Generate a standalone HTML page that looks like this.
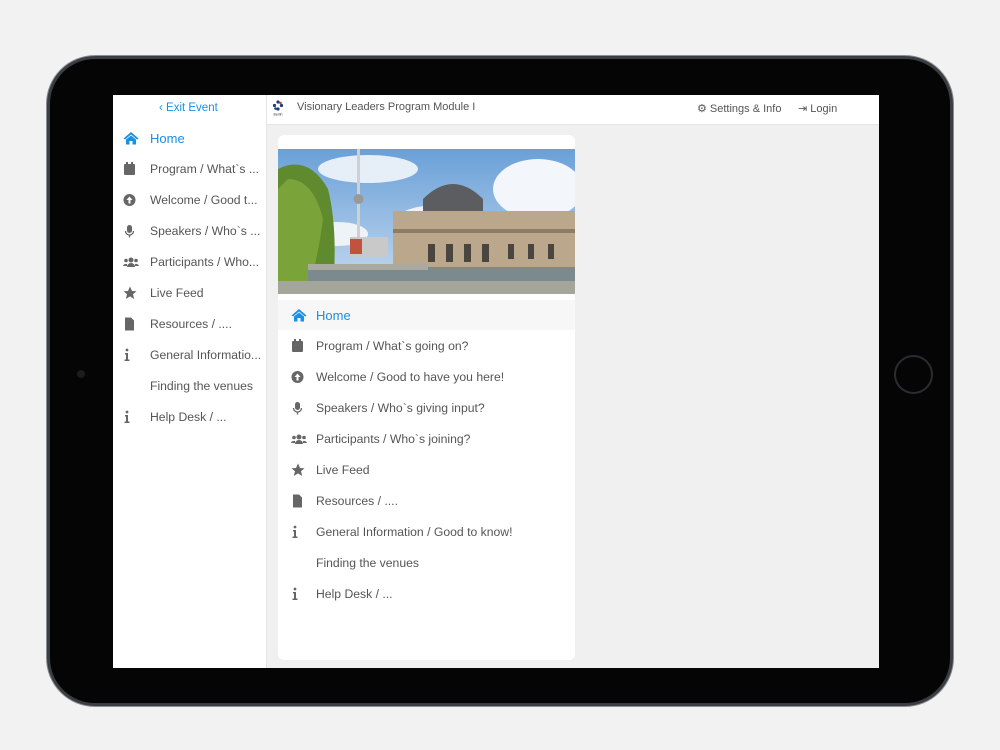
<!DOCTYPE html>
<html><head><meta charset="utf-8"><style>
*{margin:0;padding:0;box-sizing:border-box}
body{width:1000px;height:750px;background:#f2f2f2;position:relative;overflow:hidden;font-family:"Liberation Sans",sans-serif}
.ipad{position:absolute;left:47px;top:56px;width:906px;height:650px;border-radius:48px;background:#050505;border:3px solid #3a3d42;box-shadow:0 0 0 1px #8a8d92}
.cam{position:absolute;left:77px;top:370px;width:8px;height:8px;border-radius:50%;background:#1a1c20}
.home{position:absolute;left:894px;top:355px;width:39px;height:39px;border-radius:50%;border:2px solid #2a2c30}
.screen{position:absolute;left:113px;top:95px;width:766px;height:573px;background:#f0f0f0;overflow:hidden}
.top{position:absolute;left:0;top:0;width:766px;height:30px;background:#fff;border-bottom:1px solid #e6e6e6}
.side{position:absolute;left:0;top:0;width:154px;height:573px;background:#fff;border-right:1px solid #e4e4e4}
.exit{position:absolute;left:46px;top:7px;color:#1a8fe3;font-size:11.5px}
.title{position:absolute;left:184px;top:6px;font-size:11px;color:#555}
.logo{position:absolute;left:158px;top:5px}
.right{position:absolute;top:7px;font-size:11px;color:#555}
.item{position:absolute;height:30px;font-size:12.2px;color:#555;display:flex;align-items:center}
.item svg{position:absolute;left:0}
.card{position:absolute;left:165px;top:40px;width:297px;height:525px;background:#fff;border-radius:6px}
.blue{color:#1a8fe3}
</style></head><body>
<div class="ipad"></div>
<div class="cam"></div><div class="home"></div>
<div class="screen">
 <div class="top"></div>
 <div class="side">
  <div class="exit">‹ Exit Event</div>
 </div>
 <svg class="logo" width="14" height="16" viewBox="0 0 14 16"><g fill="#1e3c78"><circle cx="7" cy="2" r="1.6"/><circle cx="7" cy="9" r="1.6"/><circle cx="3.5" cy="5.5" r="1.6"/><circle cx="10.5" cy="5.5" r="1.6"/><circle cx="4.5" cy="8.5" r="1.3"/><circle cx="9.5" cy="3" r="1.3" fill="#d33"/></g><text x="7" y="15.5" font-size="3.5" text-anchor="middle" fill="#333">Berlin</text></svg>
 <div class="title">Visionary Leaders Program Module I</div>
 <div class="right" style="left:584px">⚙ Settings &amp; Info</div>
 <div class="right" style="left:685px">⇥ Login</div>

 <div class="item blue" style="left:10px;top:28px;font-size:13px"><svg width="16" height="14" viewBox="0 0 16 14"><path d="M8 1L0.5 7.5 2 8.5 8 3.5 14 8.5 15.5 7.5z M3 8.5V13.5H6.5V10H9.5V13.5H13V8.5L8 4.5z" fill="#1a8fe3"/></svg><span style="margin-left:27px">Home</span></div>
 <div class="item" style="left:10px;top:59px"><svg width="14" height="14"><rect x="1" y="2" width="11" height="11" rx="1" fill="#666"/><rect x="3" y="0" width="2" height="3" fill="#666"/><rect x="8" y="0" width="2" height="3" fill="#666"/></svg><span style="margin-left:27px">Program / What`s ...</span></div>
 <div class="item" style="left:10px;top:90px"><svg width="14" height="14"><circle cx="6.5" cy="7" r="6" fill="#666"/><path d="M6.5 3.5L3.5 7H5.5V10.5H7.5V7H9.5z" fill="#fff"/></svg><span style="margin-left:27px">Welcome / Good t...</span></div>
 <div class="item" style="left:10px;top:121px"><svg width="14" height="14"><rect x="4" y="1" width="5" height="8" rx="2.5" fill="#666"/><path d="M2.5 7a4 4 0 0 0 8 0M6.5 11v2.5" stroke="#666" stroke-width="1.3" fill="none"/></svg><span style="margin-left:27px">Speakers / Who`s ...</span></div>
 <div class="item" style="left:10px;top:152px"><svg width="16" height="14"><circle cx="8" cy="5" r="2.5" fill="#666"/><circle cx="3" cy="5.5" r="1.8" fill="#666"/><circle cx="13" cy="5.5" r="1.8" fill="#666"/><path d="M4 12a4 4 0 0 1 8 0z M0 11a3 2.5 0 0 1 4-2v2z M16 11a3 2.5 0 0 0-4-2v2z" fill="#666"/></svg><span style="margin-left:27px">Participants / Who...</span></div>
 <div class="item" style="left:10px;top:183px"><svg width="14" height="14"><path d="M7 0.5L9 5 13.5 5.3 10 8.3 11.2 13 7 10.4 2.8 13 4 8.3 0.5 5.3 5 5z" fill="#666"/></svg><span style="margin-left:27px">Live Feed</span></div>
 <div class="item" style="left:10px;top:214px"><svg width="14" height="14"><path d="M2 0.5H8L11 3.5V13.5H2z" fill="#666"/></svg><span style="margin-left:27px">Resources / ....</span></div>
 <div class="item" style="left:10px;top:245px"><svg width="14" height="14"><circle cx="4" cy="2" r="1.4" fill="#666"/><path d="M2 5H5V11.5H6.5V13H1.5V11.5H3V6.5H2z" fill="#666"/></svg><span style="margin-left:27px">General Informatio...</span></div>
 <div class="item" style="left:10px;top:276px"><span style="margin-left:27px">Finding the venues</span></div>
 <div class="item" style="left:10px;top:307px"><svg width="14" height="14"><circle cx="4" cy="2" r="1.4" fill="#666"/><path d="M2 5H5V11.5H6.5V13H1.5V11.5H3V6.5H2z" fill="#666"/></svg><span style="margin-left:27px">Help Desk / ...</span></div>

 <div class="card">
  <svg style="position:absolute;left:0;top:14px" width="297" height="145" viewBox="0 0 297 145">
   <defs><linearGradient id="sky" x1="0" y1="0" x2="0" y2="1"><stop offset="0" stop-color="#6aa0d8"/><stop offset="1" stop-color="#c9dcef"/></linearGradient></defs>
   <rect width="297" height="145" fill="url(#sky)"/>
   <ellipse cx="90" cy="20" rx="50" ry="14" fill="#e6eef7"/><ellipse cx="260" cy="40" rx="45" ry="30" fill="#f3f6fa"/><ellipse cx="60" cy="85" rx="30" ry="12" fill="#eef3f8"/><ellipse cx="160" cy="70" rx="40" ry="14" fill="#eef3f8"/>
   <rect x="79" y="0" width="3" height="100" fill="#d0d0d0"/><circle cx="80.5" cy="50" r="5" fill="#999"/>
   <rect x="72" y="88" width="38" height="20" fill="#c9c9c9"/><rect x="72" y="90" width="12" height="15" fill="#c0533d"/>
   <path d="M145 50Q175 20 205 50V62H145z" fill="#5b5d61"/><rect x="115" y="62" width="182" height="60" fill="#bba88c"/><rect x="115" y="80" width="182" height="4" fill="#8e7d66"/>
   <g fill="#4b4540"><rect x="150" y="95" width="7" height="18"/><rect x="168" y="95" width="7" height="18"/><rect x="186" y="95" width="7" height="18"/><rect x="204" y="95" width="7" height="18"/><rect x="230" y="95" width="6" height="15"/><rect x="250" y="95" width="6" height="15"/><rect x="270" y="95" width="6" height="15"/></g>
   <path d="M0 20Q30 5 50 40Q60 80 55 140H0z" fill="#5f8a2e"/><path d="M10 30Q35 30 45 70Q40 110 30 140H0V40z" fill="#7aa33a"/>
   <rect x="30" y="118" width="267" height="27" fill="#7b8a8f"/><rect x="30" y="115" width="120" height="6" fill="#a9a9a0"/><rect x="0" y="132" width="297" height="13" fill="#a4a59b"/>
  </svg>
  <div style="position:absolute;left:0;top:165px;width:297px;height:30px;background:#f7f7f7"></div>
  <div class="item blue" style="left:13px;top:165px;font-size:13px"><svg width="16" height="14" viewBox="0 0 16 14"><path d="M8 1L0.5 7.5 2 8.5 8 3.5 14 8.5 15.5 7.5z M3 8.5V13.5H6.5V10H9.5V13.5H13V8.5L8 4.5z" fill="#1a8fe3"/></svg><span style="margin-left:25px">Home</span></div>
  <div class="item" style="left:13px;top:196px"><svg width="14" height="14"><rect x="1" y="2" width="11" height="11" rx="1" fill="#666"/><rect x="3" y="0" width="2" height="3" fill="#666"/><rect x="8" y="0" width="2" height="3" fill="#666"/></svg><span style="margin-left:25px">Program / What`s going on?</span></div>
  <div class="item" style="left:13px;top:227px"><svg width="14" height="14"><circle cx="6.5" cy="7" r="6" fill="#666"/><path d="M6.5 3.5L3.5 7H5.5V10.5H7.5V7H9.5z" fill="#fff"/></svg><span style="margin-left:25px">Welcome / Good to have you here!</span></div>
  <div class="item" style="left:13px;top:258px"><svg width="14" height="14"><rect x="4" y="1" width="5" height="8" rx="2.5" fill="#666"/><path d="M2.5 7a4 4 0 0 0 8 0M6.5 11v2.5" stroke="#666" stroke-width="1.3" fill="none"/></svg><span style="margin-left:25px">Speakers / Who`s giving input?</span></div>
  <div class="item" style="left:13px;top:289px"><svg width="16" height="14"><circle cx="8" cy="5" r="2.5" fill="#666"/><circle cx="3" cy="5.5" r="1.8" fill="#666"/><circle cx="13" cy="5.5" r="1.8" fill="#666"/><path d="M4 12a4 4 0 0 1 8 0z M0 11a3 2.5 0 0 1 4-2v2z M16 11a3 2.5 0 0 0-4-2v2z" fill="#666"/></svg><span style="margin-left:25px">Participants / Who`s joining?</span></div>
  <div class="item" style="left:13px;top:320px"><svg width="14" height="14"><path d="M7 0.5L9 5 13.5 5.3 10 8.3 11.2 13 7 10.4 2.8 13 4 8.3 0.5 5.3 5 5z" fill="#666"/></svg><span style="margin-left:25px">Live Feed</span></div>
  <div class="item" style="left:13px;top:351px"><svg width="14" height="14"><path d="M2 0.5H8L11 3.5V13.5H2z" fill="#666"/></svg><span style="margin-left:25px">Resources / ....</span></div>
  <div class="item" style="left:13px;top:382px"><svg width="14" height="14"><circle cx="4" cy="2" r="1.4" fill="#666"/><path d="M2 5H5V11.5H6.5V13H1.5V11.5H3V6.5H2z" fill="#666"/></svg><span style="margin-left:25px">General Information / Good to know!</span></div>
  <div class="item" style="left:13px;top:413px"><span style="margin-left:25px">Finding the venues</span></div>
  <div class="item" style="left:13px;top:444px"><svg width="14" height="14"><circle cx="4" cy="2" r="1.4" fill="#666"/><path d="M2 5H5V11.5H6.5V13H1.5V11.5H3V6.5H2z" fill="#666"/></svg><span style="margin-left:25px">Help Desk / ...</span></div>
 </div>
</div>
</body></html>
